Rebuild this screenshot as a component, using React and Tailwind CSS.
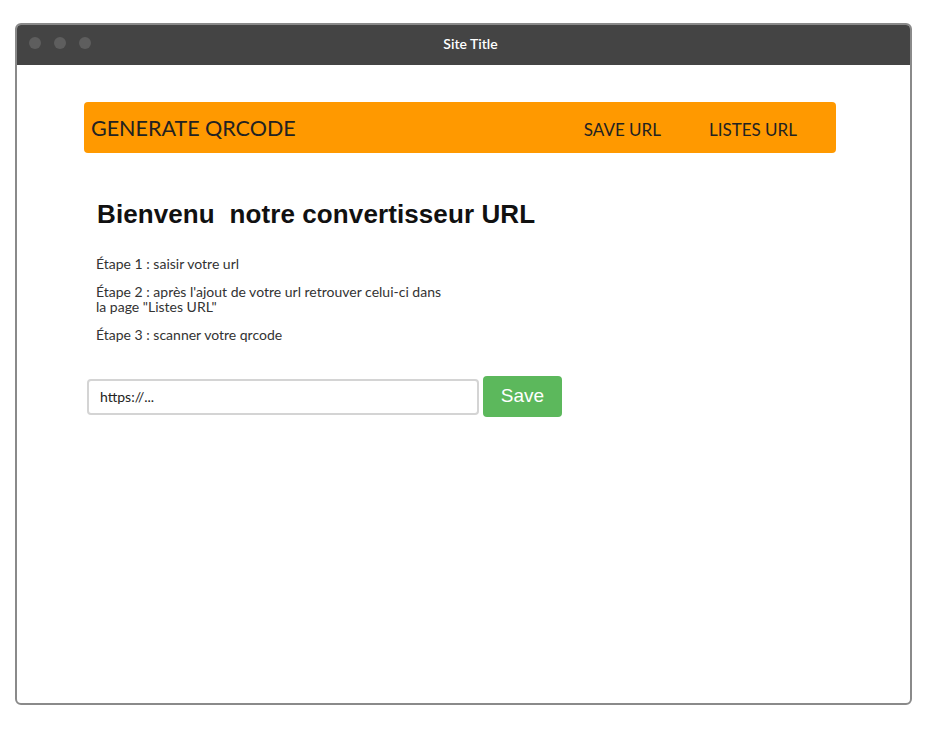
import React from 'react';

const body = { fontFamily: 'Lato, "Open Sans", sans-serif' };

export default function App() {
  return (
    <div className="min-h-screen bg-white pt-[23px] pl-[15px]" style={body}>
      {/* window frame */}
      <div className="w-[897px] h-[682px] border-2 border-[#8a8a8a] rounded-[6px] overflow-hidden flex flex-col bg-white">
        <div className="h-[40px] bg-[#444444] relative flex items-center justify-center shrink-0 pl-[14px] pb-[4px]">
          <div className="absolute left-[12px] top-[12px] flex gap-[13px]">
            <span className="w-[12px] h-[12px] rounded-full bg-[#5e5e5e]" />
            <span className="w-[12px] h-[12px] rounded-full bg-[#5e5e5e]" />
            <span className="w-[12px] h-[12px] rounded-full bg-[#5e5e5e]" />
          </div>
          <span className="text-white text-[14px] font-semibold">Site Title</span>
        </div>

        <div className="flex-1 pt-[37px] pl-[67px]">
          <nav className="w-[752px] h-[51px] bg-[#ff9900] rounded-[4px] flex items-center pl-[7px] pr-[39px] text-[#222]">
            <span className="text-[21.5px] pt-[1px]">GENERATE QRCODE</span>
            <div className="ml-auto flex gap-[48px] text-[17px] pt-[4px]">
              <span>SAVE URL</span>
              <span>LISTES URL</span>
            </div>
          </nav>

          <h1
            className="mt-[45px] ml-[13px] text-[26px] font-bold text-[#111] whitespace-pre leading-[32px] tracking-[0.1px]"
            style={{ fontFamily: '"Liberation Sans", Arial, sans-serif' }}
          >
            Bienvenu  notre convertisseur URL
          </h1>

          <div className="mt-[26px] ml-[12px] w-[356px] text-[14px] leading-[15px] text-[#333] flex flex-col gap-[13px]">
            <p>Étape 1 : saisir votre url</p>
            <p>Étape 2 : après l'ajout de votre url retrouver celui-ci dans la page "Listes URL"</p>
            <p>Étape 3 : scanner votre qrcode</p>
          </div>

          <div className="mt-[34px] ml-[3px] flex items-center gap-[4px]">
            <input
              className="w-[392px] h-[36px] border-2 border-[#d4d4d4] rounded-[4px] px-[11px] text-[14px] text-[#222] outline-none"
              defaultValue="https://..."
            />
            <button
              className="w-[79px] h-[41px] bg-[#5cb85c] rounded-[4px] text-white text-[19px]"
              style={{ fontFamily: '"Liberation Sans", Arial, sans-serif' }}
            >
              Save
            </button>
          </div>
        </div>
      </div>
    </div>
  );
}
